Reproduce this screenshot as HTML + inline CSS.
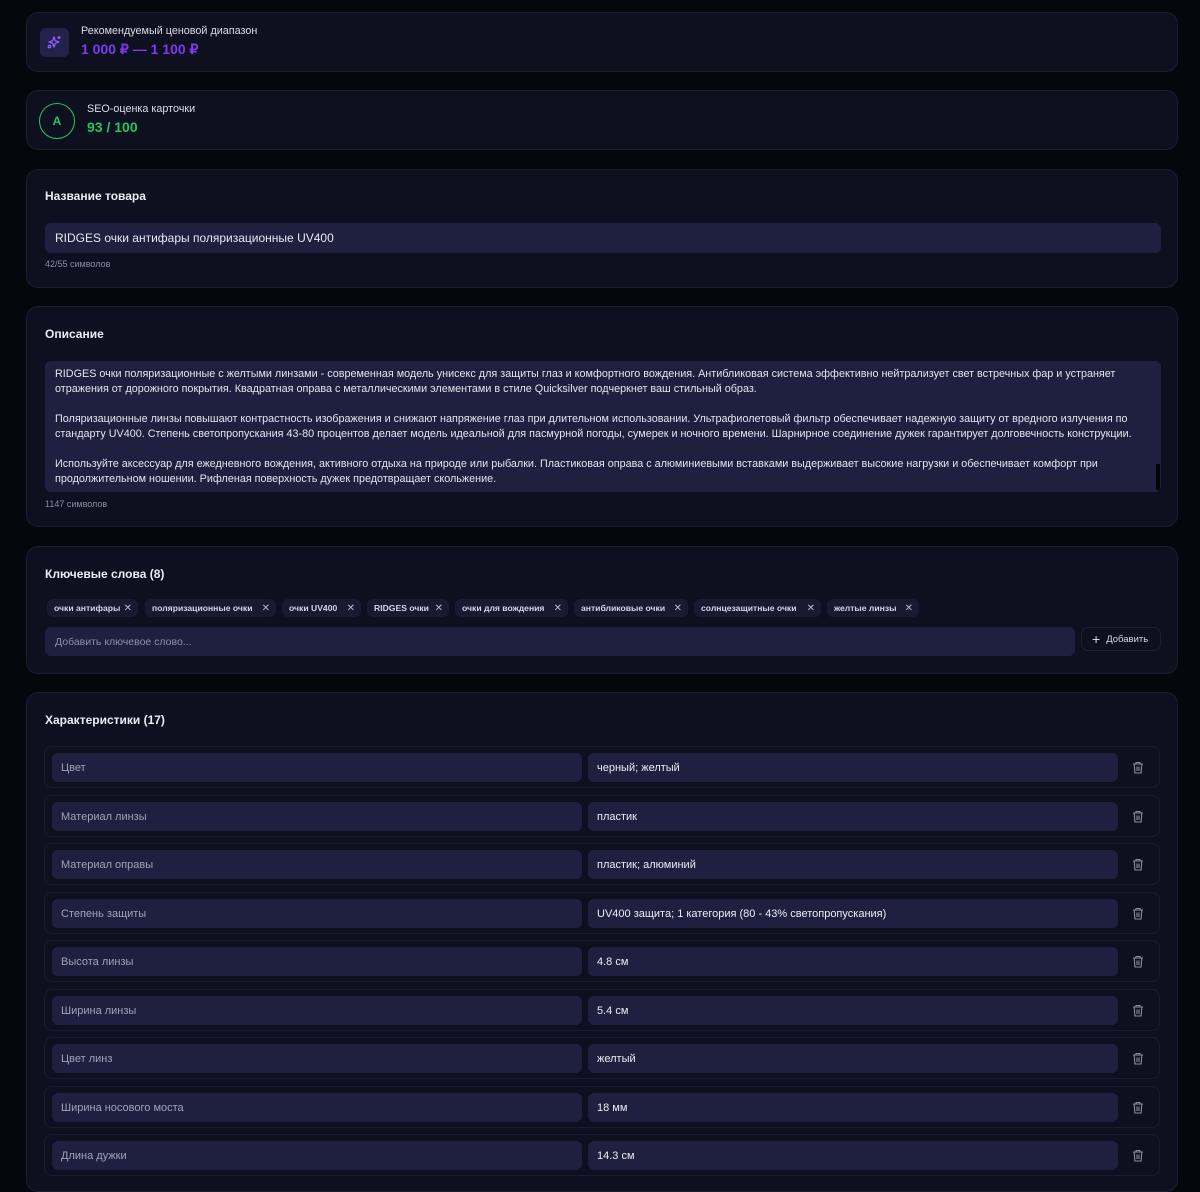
<!DOCTYPE html>
<html><head><meta charset="utf-8"><style>
*{box-sizing:border-box;margin:0;padding:0}
body{width:1200px;height:1174px;background:#06060d;font-family:"Liberation Sans","Noto Sans CJK SC",sans-serif;color:#e4e4ee;position:relative;overflow:hidden}
.card{position:absolute;left:26px;width:1152px;background:#0e1020;border:1px solid #1b1d33;border-radius:12px}
.abs{position:absolute}
.title{position:absolute;left:18px;font-size:12px;font-weight:bold;color:#ececf4}
.inp{position:absolute;background:#1f2040;border-radius:6px;font-size:12px;color:#e8e8f0;padding-left:10px;display:flex;align-items:center}
.small{position:absolute;font-size:9px;color:#8a8ca4}
.chip{position:absolute;top:52px;height:18px;background:#181a30;border-radius:6px;font-size:8.6px;font-weight:bold;color:#d4d6e4;display:flex;align-items:center;padding-left:7px;white-space:nowrap}
.chip span{margin-left:auto;margin-right:6px;color:#b8bacc;font-weight:normal;font-size:10px}
.row{position:absolute;left:17px;width:1116px;height:42px;border:1px solid #191b30;border-radius:8px}
.row .k,.row .v{position:absolute;top:6px;height:29px;background:#1f2040;border-radius:6px;font-size:11px;display:flex;align-items:center;padding-left:9px;padding-top:1px}
.row .k{left:7px;width:530px;color:#a0a2b8}
.row .v{left:543px;width:530px;color:#ececf4}
.row svg{position:absolute;left:1087px;top:14px}
</style></head><body>

<div class="card" style="top:12px;height:60px">
  <div class="abs" style="left:13px;top:15px;width:29px;height:29px;background:#22224a;border-radius:6px">
    <svg width="29" height="29" viewBox="0 0 29 29" fill="none" stroke="#8b5cf6" stroke-width="1.4" stroke-linejoin="round"><path d="M14 9 L15.3 12.7 L19 14 L15.3 15.3 L14 19 L12.7 15.3 L9 14 L12.7 12.7 Z"/><path d="M19 8v3M17.5 9.5h3"/><circle cx="9.5" cy="18.5" r="1.2"/></svg>
  </div>
  <div class="abs" style="left:54px;top:12px;font-size:10.8px;color:#dcdce8">Рекомендуемый ценовой диапазон</div>
  <div class="abs" style="left:54px;top:28px;font-size:14px;font-weight:bold;color:#7c3aed">1 000 ₽ — 1 100 ₽</div>
</div>

<div class="card" style="top:90px;height:60px">
  <div class="abs" style="left:12px;top:12px;width:36px;height:36px;border:1.5px solid #22c55e;border-radius:50%;color:#22c55e;font-size:12px;font-weight:bold;display:flex;align-items:center;justify-content:center">A</div>
  <div class="abs" style="left:60px;top:12px;font-size:10.8px;color:#dcdce8">SEO-оценка карточки</div>
  <div class="abs" style="left:60px;top:28px;font-size:14px;font-weight:bold;color:#22c55e">93 / 100</div>
</div>

<div class="card" style="top:169px;height:119px">
  <div class="title" style="top:19px">Название товара</div>
  <div class="inp" style="left:18px;top:53px;width:1116px;height:30px">RIDGES очки антифары поляризационные UV400</div>
  <div class="small" style="left:18px;top:89px">42/55 символов</div>
</div>

<div class="card" style="top:306px;height:221px">
  <div class="title" style="top:20px">Описание</div>
  <div class="abs" style="left:18px;top:54px;width:1116px;height:131px;background:#1f2040;border-radius:6px;padding:6px 10px;font-size:10.8px;line-height:15px;color:#e4e4ee;white-space:nowrap;overflow:hidden">
    RIDGES очки поляризационные с желтыми линзами - современная модель унисекс для защиты глаз и комфортного вождения. Антибликовая система эффективно нейтрализует свет встречных фар и устраняет<br>отражения от дорожного покрытия. Квадратная оправа с металлическими элементами в стиле Quicksilver подчеркнет ваш стильный образ.<br><br>Поляризационные линзы повышают контрастность изображения и снижают напряжение глаз при длительном использовании. Ультрафиолетовый фильтр обеспечивает надежную защиту от вредного излучения по<br>стандарту UV400. Степень светопропускания 43-80 процентов делает модель идеальной для пасмурной погоды, сумерек и ночного времени. Шарнирное соединение дужек гарантирует долговечность конструкции.<br><br>Используйте аксессуар для ежедневного вождения, активного отдыха на природе или рыбалки. Пластиковая оправа с алюминиевыми вставками выдерживает высокие нагрузки и обеспечивает комфорт при<br>продолжительном ношении. Рифленая поверхность дужек предотвращает скольжение.
    <div class="abs" style="right:1px;top:103px;width:4px;height:26px;background:#05050a"></div>
  </div>
  <div class="small" style="left:18px;top:192px">1147 символов</div>
</div>

<div class="card" style="top:546px;height:128px">
  <div class="title" style="top:20px">Ключевые слова (8)</div>
  <div class="chip" style="left:20px;width:91px">очки антифары<span>✕</span></div>
  <div class="chip" style="left:118px;width:131px">поляризационные очки<span>✕</span></div>
  <div class="chip" style="left:255px;width:79px">очки UV400<span>✕</span></div>
  <div class="chip" style="left:340px;width:82px">RIDGES очки<span>✕</span></div>
  <div class="chip" style="left:428px;width:113px">очки для вождения<span>✕</span></div>
  <div class="chip" style="left:547px;width:114px">антибликовые очки<span>✕</span></div>
  <div class="chip" style="left:667px;width:127px">солнцезащитные очки<span>✕</span></div>
  <div class="chip" style="left:800px;width:92px">желтые линзы<span>✕</span></div>
  <div class="inp" style="left:18px;top:80px;width:1030px;height:29px;font-size:10.5px;color:#8e90a8">Добавить ключевое слово...</div>
  <div class="abs" style="left:1054px;top:80px;width:80px;height:24px;border:1px solid #1d1f36;border-radius:7px;font-size:9.5px;color:#d6d8e6;display:flex;align-items:center;padding-left:10px"><span style="font-size:14px;margin-right:6px;font-weight:normal">+</span>Добавить</div>
</div>

<div class="card" style="top:692px;height:500px">
  <div class="title" style="top:20px">Характеристики (17)</div>
  <div class="row" style="top:53px"><div class="k">Цвет</div><div class="v">черный; желтый</div><svg width="12" height="13" viewBox="0 0 12 13" fill="none" stroke="#8a8ca4" stroke-width="1.1"><path d="M1 3h10M4 3V1.5h4V3M2.2 3l.7 9h6.2l.7-9M5 5.5v4.5M7 5.5v4.5"/></svg></div>
  <div class="row" style="top:101.5px"><div class="k">Материал линзы</div><div class="v">пластик</div><svg width="12" height="13" viewBox="0 0 12 13" fill="none" stroke="#8a8ca4" stroke-width="1.1"><path d="M1 3h10M4 3V1.5h4V3M2.2 3l.7 9h6.2l.7-9M5 5.5v4.5M7 5.5v4.5"/></svg></div>
  <div class="row" style="top:150px"><div class="k">Материал оправы</div><div class="v">пластик; алюминий</div><svg width="12" height="13" viewBox="0 0 12 13" fill="none" stroke="#8a8ca4" stroke-width="1.1"><path d="M1 3h10M4 3V1.5h4V3M2.2 3l.7 9h6.2l.7-9M5 5.5v4.5M7 5.5v4.5"/></svg></div>
  <div class="row" style="top:198.5px"><div class="k">Степень защиты</div><div class="v">UV400 защита; 1 категория (80 - 43% светопропускания)</div><svg width="12" height="13" viewBox="0 0 12 13" fill="none" stroke="#8a8ca4" stroke-width="1.1"><path d="M1 3h10M4 3V1.5h4V3M2.2 3l.7 9h6.2l.7-9M5 5.5v4.5M7 5.5v4.5"/></svg></div>
  <div class="row" style="top:247px"><div class="k">Высота линзы</div><div class="v">4.8 см</div><svg width="12" height="13" viewBox="0 0 12 13" fill="none" stroke="#8a8ca4" stroke-width="1.1"><path d="M1 3h10M4 3V1.5h4V3M2.2 3l.7 9h6.2l.7-9M5 5.5v4.5M7 5.5v4.5"/></svg></div>
  <div class="row" style="top:295.5px"><div class="k">Ширина линзы</div><div class="v">5.4 см</div><svg width="12" height="13" viewBox="0 0 12 13" fill="none" stroke="#8a8ca4" stroke-width="1.1"><path d="M1 3h10M4 3V1.5h4V3M2.2 3l.7 9h6.2l.7-9M5 5.5v4.5M7 5.5v4.5"/></svg></div>
  <div class="row" style="top:344px"><div class="k">Цвет линз</div><div class="v">желтый</div><svg width="12" height="13" viewBox="0 0 12 13" fill="none" stroke="#8a8ca4" stroke-width="1.1"><path d="M1 3h10M4 3V1.5h4V3M2.2 3l.7 9h6.2l.7-9M5 5.5v4.5M7 5.5v4.5"/></svg></div>
  <div class="row" style="top:392.5px"><div class="k">Ширина носового моста</div><div class="v">18 мм</div><svg width="12" height="13" viewBox="0 0 12 13" fill="none" stroke="#8a8ca4" stroke-width="1.1"><path d="M1 3h10M4 3V1.5h4V3M2.2 3l.7 9h6.2l.7-9M5 5.5v4.5M7 5.5v4.5"/></svg></div>
  <div class="row" style="top:441px"><div class="k">Длина дужки</div><div class="v">14.3 см</div><svg width="12" height="13" viewBox="0 0 12 13" fill="none" stroke="#8a8ca4" stroke-width="1.1"><path d="M1 3h10M4 3V1.5h4V3M2.2 3l.7 9h6.2l.7-9M5 5.5v4.5M7 5.5v4.5"/></svg></div>
</div>
</body></html>
